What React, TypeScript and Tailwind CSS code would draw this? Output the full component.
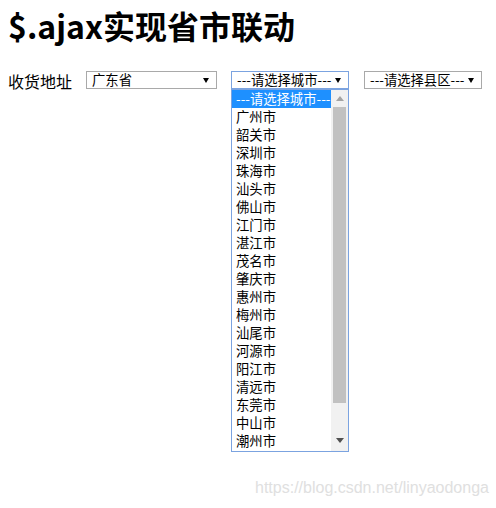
import React from "react";

const CJK = { fontFamily: '"Noto Sans CJK SC", "Noto Sans", sans-serif' };

function Arrow() {
  return (
    <svg width="6" height="5" viewBox="0 0 6 5" className="shrink-0 mt-[1px]">
      <polygon points="0,0 6,0 3,5" fill="#000" />
    </svg>
  );
}

function FakeSelect({
  text,
  width,
  focused,
}: {
  text: string;
  width: string;
  focused?: boolean;
}) {
  return (
    <div
      className={`${width} h-[18px] flex items-center justify-between bg-white pl-[5px] pr-[7px] text-[13.33px] leading-[16px] text-black border ${
        focused ? "border-[#7ba3e0]" : "border-[#a9a9a9]"
      }`}
    >
      <span className="whitespace-nowrap">{text}</span>
      <Arrow />
    </div>
  );
}

const cities = [
  "广州市",
  "韶关市",
  "深圳市",
  "珠海市",
  "汕头市",
  "佛山市",
  "江门市",
  "湛江市",
  "茂名市",
  "肇庆市",
  "惠州市",
  "梅州市",
  "汕尾市",
  "河源市",
  "阳江市",
  "清远市",
  "东莞市",
  "中山市",
  "潮州市",
];

export default function App() {
  return (
    <div className="w-[496px] h-[508px] bg-white relative overflow-hidden pl-[8px]" style={CJK}>
      <h1 className="text-[32px] font-bold leading-[40px] mt-[5px] text-black whitespace-nowrap">
        $.ajax实现省市联动
      </h1>
      <div className="flex items-center mt-[25px]">
        <span className="text-[16px] leading-[18px] text-black mt-[2px]">收货地址</span>
        <div className="ml-[14px]">
          <FakeSelect text="广东省" width="w-[131px]" />
        </div>
        <div className="ml-[14px] relative">
          <FakeSelect text="---请选择城市---" width="w-[118px]" focused />
          <div className="absolute left-0 top-[18px] w-[118px] h-[363px] border border-[#7ba3e0] bg-white flex z-10">
            <div className="flex-1 flex flex-col">
              <div className="h-[18px] flex items-center bg-[#1e90ff] text-white text-[13.33px] pl-[4px] whitespace-nowrap">
                ---请选择城市---
              </div>
              {cities.map((c) => (
                <div
                  key={c}
                  className="h-[18px] flex items-center text-black text-[13.33px] pl-[4px] whitespace-nowrap"
                >
                  {c}
                </div>
              ))}
            </div>
            <div className="w-[17px] bg-[#f1f1f1] flex flex-col items-center">
              <div className="h-[17px] flex items-center justify-center">
                <svg width="8" height="5" viewBox="0 0 8 5">
                  <polygon points="0,5 8,5 4,0" fill="#a3a3a3" />
                </svg>
              </div>
              <div className="w-[13px] h-[296px] bg-[#c1c1c1]" />
              <div className="flex-1" />
              <div className="h-[17px] flex items-center justify-center mb-[2px]">
                <svg width="8" height="5" viewBox="0 0 8 5">
                  <polygon points="0,0 8,0 4,5" fill="#505050" />
                </svg>
              </div>
            </div>
          </div>
        </div>
        <div className="ml-[15px]">
          <FakeSelect text="---请选择县区---" width="w-[118px]" />
        </div>
      </div>
      <div
        className="absolute left-[255px] top-[479px] text-[16px] leading-[18px] text-[#e0e0e0] whitespace-nowrap"
        style={{ fontFamily: '"Liberation Sans", Arial, sans-serif' }}
      >
        https://blog.csdn.net/linyaodonga
      </div>
    </div>
  );
}
